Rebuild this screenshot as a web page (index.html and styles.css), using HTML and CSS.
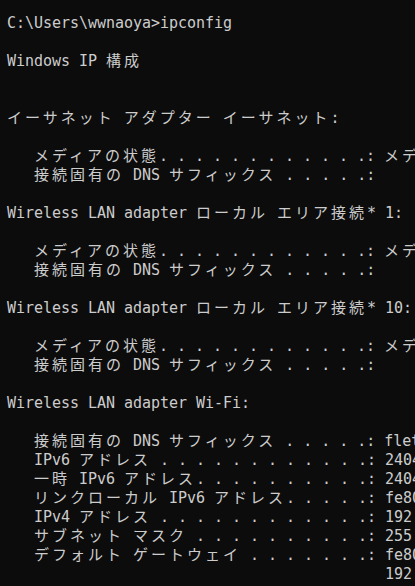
FILE: index.html
```html
<!DOCTYPE html>
<html lang="ja">
<head>
    <meta charset="UTF-8">
    <title>ipconfig</title>
    <link rel="stylesheet" href="styles.css">
</head>
<body>
<pre class="console">C:\Users\wwnaoya&gt;ipconfig

Windows IP <span class="jp">構成</span>


<span class="jp">イーサネット</span> <span class="jp">アダプター</span> <span class="jp">イーサネット</span>:

   <span class="jp">メディアの状態</span>. . . . . . . . . . . .: <span class="jp">メディアは接続されていません</span>
   <span class="jp">接続固有の</span> DNS <span class="jp">サフィックス</span> . . . . .:

Wireless LAN adapter <span class="jp">ローカル</span> <span class="jp">エリア接続</span>* 1:

   <span class="jp">メディアの状態</span>. . . . . . . . . . . .: <span class="jp">メディアは接続されていません</span>
   <span class="jp">接続固有の</span> DNS <span class="jp">サフィックス</span> . . . . .:

Wireless LAN adapter <span class="jp">ローカル</span> <span class="jp">エリア接続</span>* 10:

   <span class="jp">メディアの状態</span>. . . . . . . . . . . .: <span class="jp">メディアは接続されていません</span>
   <span class="jp">接続固有の</span> DNS <span class="jp">サフィックス</span> . . . . .:

Wireless LAN adapter Wi-Fi:

   <span class="jp">接続固有の</span> DNS <span class="jp">サフィックス</span> . . . . .: flets-east.jp
   IPv6 <span class="jp">アドレス</span> . . . . . . . . . . . .: 2404:7a80:9a40:d800:5c1e:31b2:8f4a:1c20
   <span class="jp">一時</span> IPv6 <span class="jp">アドレス</span>. . . . . . . . . .: 2404:7a80:9a40:d800:e4b1:77c9:2a0d:61f3
   <span class="jp">リンクローカル</span> IPv6 <span class="jp">アドレス</span>. . . . .: fe80::8c2d:5b1f:3e07:a914%12
   IPv4 <span class="jp">アドレス</span> . . . . . . . . . . . .: 192.168.1.10
   <span class="jp">サブネット</span> <span class="jp">マスク</span> . . . . . . . . . .: 255.255.255.0
   <span class="jp">デフォルト</span> <span class="jp">ゲートウェイ</span> . . . . . . .: fe80::1%12
                                          192.168.1.1</pre>
</body>
</html>
```

FILE: styles.css
```css
html,
body {
    margin: 0;
    height: 100%;
    overflow: hidden;
    background-color: #0c0c0c;
}

.console {
    margin: 0;
    padding: 14px 0 0 7px;
    font-family: "DejaVu Sans Mono", "Noto Sans CJK JP", monospace;
    font-size: 15px;
    line-height: 19px;
    letter-spacing: -0.03px;
    color: #cccccc;
    white-space: pre;
}

/* full-width text takes two cells (18px) like in the terminal */
.jp {
    font-family: "Noto Sans CJK JP", sans-serif;
    font-size: 15px;
    line-height: 0;
    letter-spacing: 3px;
}
```
